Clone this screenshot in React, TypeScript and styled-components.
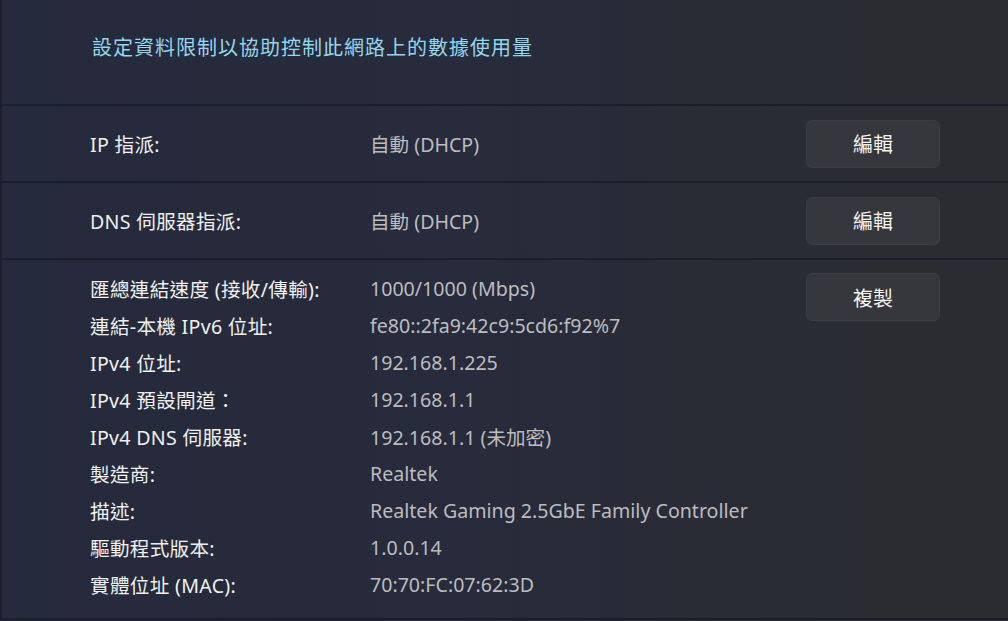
import React from "react";
import styled, { createGlobalStyle } from "styled-components";

const Global = createGlobalStyle`
  html, body { margin: 0; padding: 0; background: #1d2030; }
  body { font-family: "Noto Sans", "Noto Sans CJK TC", sans-serif; }
`;

const Page = styled.div`
  width: 1008px;
  height: 621px;
  box-sizing: border-box;
  border-left: 2px solid #1c1f2c;
  background: linear-gradient(90deg, #252a3c 0%, #272b3b 45%, #2a2c34 75%, #2b2c30 100%);
  display: flex;
  flex-direction: column;
  overflow: hidden;
`;

const Header = styled.div`
  height: 106px;
  flex-shrink: 0;
  box-sizing: border-box;
  padding: 0 0 12px 90px;
  display: flex;
  align-items: center;
  border-bottom: 2px solid #1c1f2b;
`;

const LinkText = styled.span`
  color: #94d6f0;
  font-size: 20px;
  letter-spacing: 1px;
`;

const Row = styled.div<{ $tall?: boolean }>`
  display: grid;
  flex-shrink: 0;
  grid-template-columns: 280px 1fr 134px;
  align-items: ${(p) => (p.$tall ? "start" : "center")};
  padding: ${(p) => (p.$tall ? "10px 68px 15px 88px" : "0 68px 0 88px")};
  height: ${(p) => (p.$tall ? "auto" : "75px")};
  border-bottom: 2px solid #1c1f2b;
`;

const List = styled.div`
  grid-column: 1 / span 2;
  display: grid;
  grid-template-columns: 280px 1fr;
  grid-auto-rows: 37px;
  align-items: center;
`;

const Label = styled.span`
  color: #f0f0f0;
  font-size: 19.6px;
  letter-spacing: 0.3px;
`;

const Value = styled.span`
  color: #bcbcbf;
  font-size: 19.6px;
`;

const Button = styled.button<{ $offset?: number }>`
  width: 134px;
  height: 48px;
  margin-top: ${(p) => p.$offset ?? 0}px;
  border-radius: 6px;
  border: 1px solid #3c3d42;
  background: #36373c;
  color: #f4f4f4;
  font-family: "Noto Sans CJK TC", sans-serif;
  font-size: 20px;
  padding: 0;
`;

const details: [string, string][] = [
  ["匯總連結速度 (接收/傳輸):", "1000/1000 (Mbps)"],
  ["連結-本機 IPv6 位址:", "fe80::2fa9:42c9:5cd6:f92%7"],
  ["IPv4 位址:", "192.168.1.225"],
  ["IPv4 預設閘道：", "192.168.1.1"],
  ["IPv4 DNS 伺服器:", "192.168.1.1 (未加密)"],
  ["製造商:", "Realtek"],
  ["描述:", "Realtek Gaming 2.5GbE Family Controller"],
  ["驅動程式版本:", "1.0.0.14"],
  ["實體位址 (MAC):", "70:70:FC:07:62:3D"],
];

export default function App() {
  return (
    <>
      <Global />
      <Page>
        <Header>
          <LinkText>設定資料限制以協助控制此網路上的數據使用量</LinkText>
        </Header>
        <Row>
          <Label>IP 指派:</Label>
          <Value>自動 (DHCP)</Value>
          <Button>編輯</Button>
        </Row>
        <Row>
          <Label>DNS 伺服器指派:</Label>
          <Value>自動 (DHCP)</Value>
          <Button>編輯</Button>
        </Row>
        <Row $tall>
          <List>
            {details.map(([l, v]) => (
              <React.Fragment key={l}>
                <Label>{l}</Label>
                <Value>{v}</Value>
              </React.Fragment>
            ))}
          </List>
          <Button $offset={3}>複製</Button>
        </Row>
      </Page>
    </>
  );
}
